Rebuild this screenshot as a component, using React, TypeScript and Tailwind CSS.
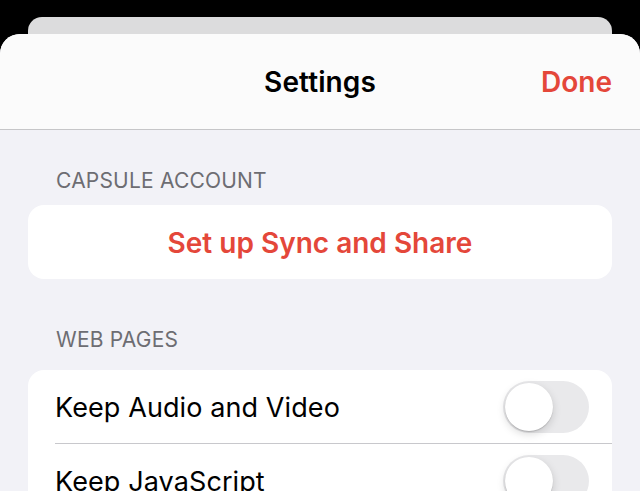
import React from "react"

const font = { fontFamily: "Inter, 'Noto Sans', sans-serif" }

function Toggle() {
  return (
    <div className="relative h-[52px] w-[86px] rounded-full bg-[#e9e9eb]">
      <div className="absolute left-[2px] top-[2px] h-[48px] w-[48px] rounded-full bg-white shadow-[0_3px_8px_rgba(0,0,0,0.15),0_1px_1px_rgba(0,0,0,0.16)]" />
    </div>
  )
}

function SectionLabel({ children, gap }: { children: React.ReactNode; gap: string }) {
  return (
    <div className={"px-[56px] text-[21px] leading-[24px] tracking-[0.2px] text-[#6d6d72] " + gap}>
      {children}
    </div>
  )
}

export default function App() {
  const toggles = ["Keep Audio and Video", "Keep JavaScript"]

  return (
    <div className="h-[491px] w-[640px] overflow-hidden bg-black pt-[17px]" style={font}>
      {/* stacked sheet behind */}
      <div className="mx-[28px] h-[17px] rounded-t-[14px] bg-[#dcdcdd]" />

      <div className="h-[500px] rounded-t-[20px] bg-[#f2f2f7] overflow-hidden">
        <div className="relative flex h-[96px] items-center justify-center border-b border-[#c6c6c8] bg-[#fbfbfb]">
          <span className="text-[28px] font-semibold text-black tracking-[0.1px]">Settings</span>
          <span className="absolute right-[28px] text-[28px] font-semibold text-[#e4473a]">
            Done
          </span>
        </div>

        <div className="pt-[39px]">
          <SectionLabel gap="pb-[12px]">CAPSULE ACCOUNT</SectionLabel>
          <div className="mx-[28px] flex h-[74px] items-center justify-center rounded-[16px] bg-white">
            <span className="mt-[1px] text-[28px] font-semibold text-[#e4473a]">Set up Sync and Share</span>
          </div>
        </div>

        <div className="pt-[49px]">
          <SectionLabel gap="pb-[18px]">WEB PAGES</SectionLabel>
          <div className="mx-[28px] rounded-[16px] bg-white">
            {toggles.map((label, i) => (
              <div key={label} className="pl-[27px]">
                <div
                  className={
                    "flex h-[74px] items-center justify-between pr-[23px] " +
                    (i < toggles.length - 1 ? "border-b border-[#c8c8cc]" : "")
                  }
                >
                  <span className="mt-[3px] text-[27px] text-black tracking-[0.1px]">{label}</span>
                  <Toggle />
                </div>
              </div>
            ))}
          </div>
        </div>
      </div>
    </div>
  )
}
